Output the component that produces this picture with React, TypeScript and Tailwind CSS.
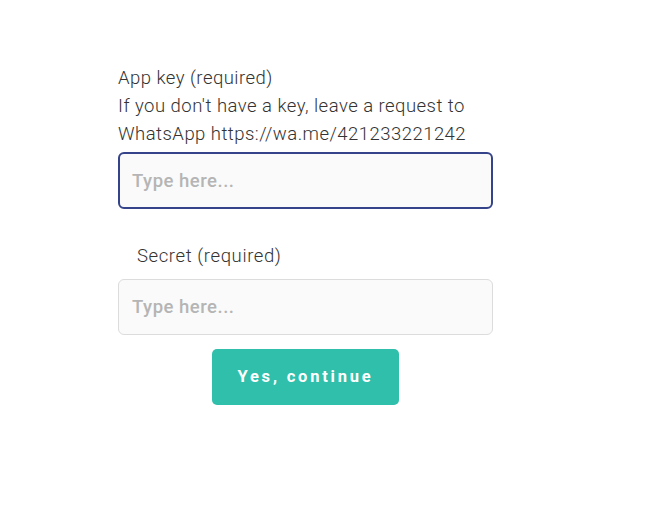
export default function App() {
  return (
    <div
      className="min-h-[514px] w-full bg-white pt-[64px]"
      style={{ fontFamily: "Roboto, 'Liberation Sans', sans-serif" }}
    >
      <div className="ml-[118px] flex w-[375px] flex-col">
        <div className="text-[18.5px] leading-[28px] font-light tracking-[0.47px] text-[#333]">
          <div>App key (required)</div>
          <div>If you don't have a key, leave a request to</div>
          <div>WhatsApp https://wa.me/421233221242</div>
        </div>
        <input
          placeholder="Type here..."
          className="mt-[4px] h-[57px] w-full rounded-[6px] border-2 border-[#34438a] bg-[#fafafa] px-[12px] text-[18.5px] font-medium tracking-[0.5px] text-[#333] outline-none placeholder:text-[#b5b5b5]"
        />
        <div className="mt-[33px] pl-[19px] text-[18.5px] leading-[28px] font-light tracking-[0.6px] text-[#333]">
          Secret (required)
        </div>
        <input
          placeholder="Type here..."
          className="mt-[9px] h-[56px] w-full rounded-[6px] border border-[#dcdcdc] bg-[#fafafa] px-[13px] text-[18.5px] font-medium tracking-[0.5px] text-[#333] outline-none placeholder:text-[#b5b5b5]"
        />
        <div className="mt-[14px] flex justify-center">
          <button className="h-[56px] w-[187px] rounded-[5px] bg-[#2fbfab] text-[16.5px] font-bold tracking-[2.8px] text-white">
            Yes, continue
          </button>
        </div>
      </div>
    </div>
  );
}
